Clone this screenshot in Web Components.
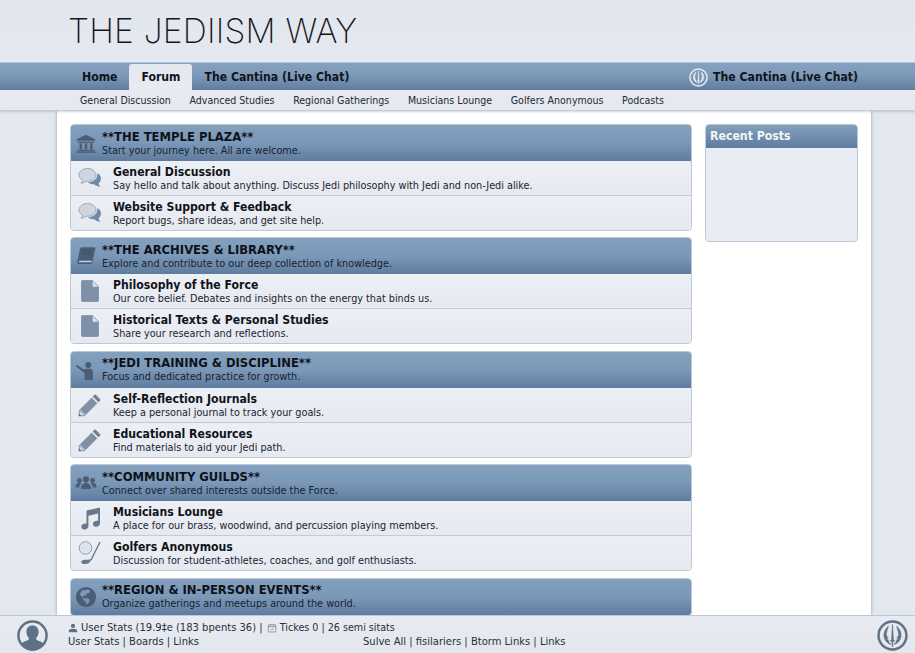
<!DOCTYPE html>
<html lang="en">
<head>
<meta charset="utf-8">
<title>The Jediism Way</title>
<style>
  html, body { margin: 0; height: 100%; overflow: hidden; }
  body { font-family: "DejaVu Sans", sans-serif; color: #14181f; background: #e3e7ee; }
  jedi-app { height: 653px; }
</style>
</head>
<body>
<jedi-app>
  <site-masthead slot="top">THE JEDIISM WAY</site-masthead>
  <main-nav slot="top">
    <a>Home</a>
    <a class="on" data-on>Forum</a>
    <a>The Cantina (Live Chat)</a>
    <span slot="right"><jedi-icon name="jedi" size="19" light></jedi-icon>The Cantina (Live Chat)</span>
  </main-nav>
  <sub-nav slot="top">
    <span>General Discussion</span>
    <span>Advanced Studies</span>
    <span>Regional Gatherings</span>
    <span>Musicians Lounge</span>
    <span>Golfers Anonymous</span>
    <span>Podcasts</span>
  </sub-nav>

  <forum-category icon="temple" heading="**THE TEMPLE PLAZA**" desc="Start your journey here. All are welcome.">
    <forum-row icon="chat" heading="General Discussion" desc="Say hello and talk about anything. Discuss Jedi philosophy with Jedi and non-Jedi alike."></forum-row>
    <forum-row icon="chat" heading="Website Support &amp; Feedback" desc="Report bugs, share ideas, and get site help."></forum-row>
  </forum-category>
  <forum-category icon="book" heading="**THE ARCHIVES &amp; LIBRARY**" desc="Explore and contribute to our deep collection of knowledge.">
    <forum-row icon="page" heading="Philosophy of the Force" desc="Our core belief. Debates and insights on the energy that binds us."></forum-row>
    <forum-row icon="page" heading="Historical Texts &amp; Personal Studies" desc="Share your research and reflections."></forum-row>
  </forum-category>
  <forum-category icon="teacher" heading="**JEDI TRAINING &amp; DISCIPLINE**" desc="Focus and dedicated practice for growth.">
    <forum-row icon="pencil" heading="Self-Reflection Journals" desc="Keep a personal journal to track your goals."></forum-row>
    <forum-row icon="pencil" heading="Educational Resources" desc="Find materials to aid your Jedi path."></forum-row>
  </forum-category>
  <forum-category icon="people" heading="**COMMUNITY GUILDS**" desc="Connect over shared interests outside the Force.">
    <forum-row icon="music" heading="Musicians Lounge" desc="A place for our brass, woodwind, and percussion playing members."></forum-row>
    <forum-row icon="golf" heading="Golfers Anonymous" desc="Discussion for student-athletes, coaches, and golf enthusiasts."></forum-row>
  </forum-category>
  <forum-category icon="globe" heading="**REGION &amp; IN-PERSON EVENTS**" desc="Organize gatherings and meetups around the world."></forum-category>

  <side-panel slot="side" heading="Recent Posts"></side-panel>

  <status-bar slot="bottom"></status-bar>
</jedi-app>

<script>
// icons are all drawn on a 24x24 box
const ICONS = {
  temple: '<path d="M12 3 2 8v1.6h20V8z"/><rect x="3" y="10.6" width="18" height="1.3"/><rect x="5" y="12.4" width="2.6" height="6.6"/><rect x="10.7" y="12.4" width="2.6" height="6.6"/><rect x="16.4" y="12.4" width="2.6" height="6.6"/><rect x="3" y="19.4" width="18" height="1.4"/><rect x="1.5" y="21.2" width="21" height="1.5"/>',
  book: '<path d="M7.5 2.500H21.500c.6 0 1 .5.8 1.100l-3.600 16c-.2.7-.7 1.100-1.400 1.100H4.500c-1.300 0-2.300-1.100-2-2.500L5.400 4.200c.3-1 1.100-1.700 2.100-1.700z"/><path d="M4.600 17.200h13.700l-.4 1.600H4.300z" fill="#c6d0dc"/><path d="M8.400 6.500h10M7.900 9.500h10" stroke="#3f5066" stroke-width=".9" fill="none"/>',
  teacher: '<circle cx="14.500" cy="6.500" r="3.300"/><path d="M2 6.500 10 11.400c.8-.6 1.600-.9 2.500-.9h4c1.900 0 3 1.300 3 3V23h-9v-7.700L1 8.200z"/>',
  people: '<circle cx="12" cy="8" r="3.400"/><circle cx="4.800" cy="9.200" r="2.700"/><circle cx="19.200" cy="9.200" r="2.700"/><path d="M6.400 18.500c0-4 2.200-6.600 5.600-6.600s5.600 2.600 5.600 6.600z"/><path d="M.5 17c0-3 1.500-5.200 4.300-5.200.8 0 1.400.2 2 .5-1.400 1.300-2.100 2.900-2.300 4.700z"/><path d="M23.500 17c0-3-1.500-5.200-4.300-5.200-.8 0-1.400.2-2 .5 1.400 1.300 2.100 2.900 2.300 4.700z"/>',
  globe: '<path fill-rule="evenodd" d="M12 1a11 11 0 1 0 0 22 11 11 0 0 0 0-22zM8 4.400l3 .6 2.500-1.200 3 1.200-1 2.500-2.600.5-.7 2.300-3 .2-.6 2.200 2.600 1 1.800-.6 2.800 1.400.2 2.200-2 3-2 .6-.6-3.400-2.400-1.600-.6-2.800-3-2.600.4-2.300z"/><path d="m18.500 8.500 2.500-.5.8 3-2 1.500z"/>',
  chat: '<path d="M19.500 7c1.900 1.200 3.500 3 3.500 5.500 0 1.900-.9 3.500-2.400 4.700.2 1.300.9 2.500 2 3.500-2.700-.2-4.800-1.100-6.400-2.500-2.300.2-4.600-.5-6.200-2 5 .2 9.800-3.200 9.500-9.200z" fill="#6f89a8"/><path d="M9.500 2.500C4.800 2.500 1 5.300 1 8.900c0 2.200 1.400 4.100 3.600 5.300-.2 1.100-.8 2.200-1.700 3 2.200-.2 4-1 5.300-2.100.4 0 .9.100 1.300.1 4.700 0 8.500-2.900 8.500-6.300s-3.800-6.400-8.500-6.400z" fill="#cdd5df" stroke="#98a8bb" stroke-width="1"/>',
  page: '<path d="M4.500 1.500h10L20.500 8v13.500c0 .6-.4 1-1 1h-15c-.6 0-1-.4-1-1v-19c0-.6.4-1 1-1z" fill="#7e91a8" stroke="#6b7f97" stroke-width=".6"/><path d="M14.500 1.500V8h6z" fill="#dfe4eb" stroke="#8a9bb0" stroke-width=".6"/>',
  pencil: '<path d="m17.800 1.800 4.400 4.400c.4.4.4 1 0 1.400l-1.700 1.700-5.800-5.800 1.700-1.700c.4-.4 1-.4 1.400 0z" fill="#6f8299"/><path d="M13.700 4.500 19.500 10.300 7.500 22.300 1.700 16.500z" fill="#7f90a6" stroke="#dfe5ec" stroke-width=".4"/><path d="M1.400 17.200 1 23l5.800-.4z" fill="#dbe1e9" stroke="#6f8299" stroke-width=".8"/><path d="M1 23l.2-2.400L3.400 22.800z" fill="#56677d"/>',
  music: '<path d="M8.500 4.500 22 1.500v15.800c0 1.900-1.800 3.400-3.900 3.400s-3.200-1.200-3.200-2.800c0-1.900 1.800-3.200 3.800-3.200.5 0 1 .1 1.400.3V7.500l-9.700 2.200v10.500c0 1.800-1.800 3.300-3.900 3.300S3.300 22.300 3.300 20.700c0-1.800 1.700-3.200 3.700-3.200.6 0 1.100.1 1.500.3z"/>',
  golf: '<circle cx="7.500" cy="7" r="6.300" fill="#dfe4ec" stroke="#8a9bb0" stroke-width=".9"/><path d="M22 1 13 19" stroke="#66798f" stroke-width="1.400" fill="none"/><path d="M13.500 18c-.8 3-3 5-6.500 5-2.300 0-3.800-.6-3.800-1.800 0-1.500 1.600-2.500 3.600-2.500 2.300 0 4.900.2 6.700-.7z" fill="#66798f"/>',
  user: '<circle cx="12" cy="7" r="5"/><path d="M2 22v-3c0-3.500 3.500-5.500 10-5.500s10 2 10 5.500v3z"/>',
  calendar: '<rect x="3" y="4.500" width="18" height="17" rx="1" fill="none" stroke="currentColor" stroke-width="1.500"/><path d="M3 9h18M8 2.500v4M16 2.500v4" stroke="currentColor" stroke-width="1.500" fill="none"/><path d="m9 15 2.500 2.500L15 12.500" stroke="currentColor" stroke-width="1.300" fill="none"/>',
  avatar: '<circle cx="12" cy="12" r="10.900" fill="none" stroke="currentColor" stroke-width="1.900"/><path d="M12 4.200c-3 0-4.700 2.100-4.700 5 0 1.900.7 3.500 1.800 4.600v1.500c-2.200 1-4.800 1.600-5.900 3.200a10 10 0 0 0 17.600 0c-1.100-1.600-3.700-2.200-5.900-3.200v-1.500c1.100-1.100 1.800-2.700 1.800-4.600 0-2.900-1.700-5-4.700-5z"/>',
  jedi: '<circle cx="12" cy="12" r="10.800" fill="none" stroke="currentColor" stroke-width="1.900"/><g stroke="currentColor" stroke-width=".5"><path d="M12 3.500 11.300 15l-1 1.300 1.300.3.400 4.400.4-4.400 1.300-.3-1-1.300z"/><path d="M8.800 4.800C5.300 7.600 4.300 12.500 6.700 16c1 1.500 2.700 2.600 4.300 2.900-1.400-1-2.400-2.300-2.300-3.700-1 .1-1.500-.4-1.700-1 .9.200 1.400 0 1.500-.6-1-.8-1.500-2-1.200-3.300.2-1.900 1-3.700 1.500-5.500z"/><path d="M15.200 4.800c3.500 2.800 4.500 7.700 2.100 11.200-1 1.500-2.700 2.600-4.300 2.900 1.400-1 2.400-2.300 2.300-3.700 1 .1 1.500-.4 1.700-1-.9.200-1.400 0-1.500-.6 1-.8 1.500-2 1.200-3.300-.2-1.900-1-3.700-1.500-5.500z"/></g>'
};

const BOLD = '"DejaVu Sans Condensed", "DejaVu Sans", sans-serif';

class JediIcon extends HTMLElement {
  connectedCallback() {
    const size = this.getAttribute('size') || 24;
    const color = this.hasAttribute('light') ? '#e8edf3' : (this.getAttribute('color') || '#56697f');
    this.attachShadow({ mode: 'open' }).innerHTML = `
      <style>:host { display: inline-flex; flex: none; color: ${color}; } svg { display: block; fill: currentColor; }</style>
      <svg width="${size}" height="${size}" viewBox="0 0 24 24">${ICONS[this.getAttribute('name')] || ''}</svg>`;
  }
}
customElements.define('jedi-icon', JediIcon);

class JediApp extends HTMLElement {
  constructor() {
    super();
    this.attachShadow({ mode: 'open' }).innerHTML = `
      <style>
        :host { display: flex; flex-direction: column; overflow: hidden; }
        .middle { flex: 1; min-height: 0; overflow: hidden; position: relative; }
        .sheet {
          margin: 0 44px 0 57px; height: 100%; box-sizing: border-box; background: #fff;
          box-shadow: 0 0 3px rgba(70,90,115,.55);
          padding: 13px 13px 0; display: grid; grid-template-columns: 622px 153px; gap: 13px;
          align-items: start;
        }
        .cats { display: flex; flex-direction: column; gap: 6.4px; }
      </style>
      <slot name="top"></slot>
      <div class="middle"><div class="sheet">
        <div class="cats"><slot></slot></div>
        <slot name="side"></slot>
      </div></div>
      <slot name="bottom"></slot>`;
  }
}
customElements.define('jedi-app', JediApp);

class SiteMasthead extends HTMLElement {
  constructor() {
    super();
    this.attachShadow({ mode: 'open' }).innerHTML = `
      <style>
        :host { display: block; height: 62px; box-sizing: border-box; padding: 11px 0 0 68px;
          background: linear-gradient(#e2e6ed, #e5e8ef);
          font: 200 33.500px/40px Inter, sans-serif; letter-spacing: .22px; color: #14181e; }
      </style><slot></slot>`;
  }
}
customElements.define('site-masthead', SiteMasthead);

class MainNav extends HTMLElement {
  constructor() {
    super();
    this.attachShadow({ mode: 'open' }).innerHTML = `
      <style>
        :host { display: flex; justify-content: space-between; height: 28px; box-sizing: border-box;
          padding: 1px 57px 0 70px; border-top: 1px solid #b8c5d4;
          background: linear-gradient(#86a1be, #7e9ab9 45%, #5f7d9f);
          font: bold 12.150px/26px ${BOLD}; color: #10141a; }
        .links { display: flex; }
        ::slotted(a) { padding: 0 12px; }
        ::slotted(a[data-on]) { background: linear-gradient(#e3e8ee, #e8ebf1); border-radius: 3px 3px 0 0; }
        ::slotted([slot=right]) { display: flex; align-items: center; gap: 5px; }
      </style>
      <div class="links"><slot></slot></div>
      <slot name="right"></slot>`;
  }
}
customElements.define('main-nav', MainNav);

class SubNav extends HTMLElement {
  constructor() {
    super();
    this.attachShadow({ mode: 'open' }).innerHTML = `
      <style>
        :host { display: flex; gap: 18.600px; height: 21px; box-sizing: border-box; padding-left: 80px;
          background: #e6e9f0; border-bottom: 1px solid #c3ccd8; position: relative; z-index: 1;
          font: 10.550px/20px "DejaVu Sans Condensed", "DejaVu Sans", sans-serif; color: #222934;
          box-shadow: 0 1px 2px rgba(80,100,125,.25); }
      </style><slot></slot>`;
  }
}
customElements.define('sub-nav', SubNav);

class ForumCategory extends HTMLElement {
  constructor() {
    super();
    this.attachShadow({ mode: 'open' });
  }
  connectedCallback() {
    this.shadowRoot.innerHTML = `
      <style>
        :host { display: block; border: 1px solid #bcc8d6; border-radius: 4px; background: #e9ecf2; overflow: hidden; }
        .head { display: flex; align-items: center; height: 36px; padding: 0 0 0 4px; box-sizing: border-box;
          background: linear-gradient(#84a0be, #7b98b8 50%, #5e7c9f); }
        .ic { width: 22px; display: flex; justify-content: center; margin-right: 5px; }
        b { display: block; font: bold 12.900px/15px ${BOLD}; color: #0e1218; }
        span { display: block; font: 10.750px/14px "DejaVu Sans Condensed", "DejaVu Sans", sans-serif; color: #182230; }
        .rows { display: block; }
      </style>
      <div class="head">
        <div class="ic"><jedi-icon name="${this.getAttribute('icon')}" size="22" color="#4a5d74"></jedi-icon></div>
        <div><b>${this.getAttribute('heading').replace(/&/g, '&amp;')}</b><span>${this.getAttribute('desc')}</span></div>
      </div>
      <div class="rows"><slot></slot></div>`;
  }
}
customElements.define('forum-category', ForumCategory);

class ForumRow extends HTMLElement {
  constructor() {
    super();
    this.attachShadow({ mode: 'open' });
  }
  connectedCallback() {
    this.shadowRoot.innerHTML = `
      <style>
        :host { display: flex; align-items: center; height: 34px; background: linear-gradient(#eceff4, #e6e9f0); }
        :host(:not(:last-child)) { height: 35px; border-bottom: 1px solid #c2cbd7; box-sizing: border-box; }
        .ic { width: 42px; padding-left: 7px; box-sizing: border-box; display: flex; }
        .tx { padding-top: 1px; }
        b { display: block; font: bold 12.150px/14px ${BOLD}; color: #10141a; }
        span { display: block; font: 10.750px/13px "DejaVu Sans Condensed", "DejaVu Sans", sans-serif; color: #1c2430; }
      </style>
      <div class="ic"><jedi-icon name="${this.getAttribute('icon')}" size="24" color="#66798f"></jedi-icon></div>
      <div class="tx"><b>${this.getAttribute('heading').replace(/&/g, '&amp;')}</b><span>${this.getAttribute('desc')}</span></div>`;
  }
}
customElements.define('forum-row', ForumRow);

class SidePanel extends HTMLElement {
  connectedCallback() {
    this.attachShadow({ mode: 'open' }).innerHTML = `
      <style>
        :host { display: block; height: 118px; box-sizing: border-box; border: 1px solid #bcc8d6; border-radius: 4px;
          background: #e9ecf2; overflow: hidden; }
        div { height: 23px; padding-left: 4px; background: linear-gradient(#84a0be, #5e7c9f);
          font: bold 12.200px/23px ${BOLD}; color: #f3f6f9; }
      </style>
      <div>${this.getAttribute('heading')}</div>`;
  }
}
customElements.define('side-panel', SidePanel);

class StatusBar extends HTMLElement {
  constructor() {
    super();
    this.attachShadow({ mode: 'open' }).innerHTML = `
      <style>
        :host { display: flex; align-items: center; height: 38px; box-sizing: border-box; padding: 1px 7px 0 17px;
          background: linear-gradient(#e8ebf1, #e3e7ee); border-top: 1px solid #bdc8d5; position: relative;
          font: 11.100px/14px "DejaVu Sans Condensed", "DejaVu Sans", sans-serif; color: #27303c; }
        .txt { flex: 1; margin-left: 20px; }
        .line { display: flex; align-items: center; gap: 3px; white-space: pre; }
        .line .cal { margin-left: -2px; }
        .line .tick { font-size: 10.650px; }
        .links { display: grid; grid-template-columns: 295px auto; }
      </style>
      <jedi-icon name="avatar" size="31" color="#5e7186"></jedi-icon>
      <div class="txt">
        <div class="line"><jedi-icon name="user" size="10" color="#5e7186"></jedi-icon><span>User Stats (19.9‡e (183 bpents 36) | </span><jedi-icon class="cal" name="calendar" size="10" color="#5e7186"></jedi-icon><span class="tick">Tickes 0 | 26 semi sitats</span></div>
        <div class="links"><span>User Stats | Boards | Links</span><span>Sulve All | fisilariers | Btorm Links | Links</span></div>
      </div>
      <jedi-icon name="jedi" size="31" color="#5e7186"></jedi-icon>`;
  }
}
customElements.define('status-bar', StatusBar);
</script>
</body>
</html>
